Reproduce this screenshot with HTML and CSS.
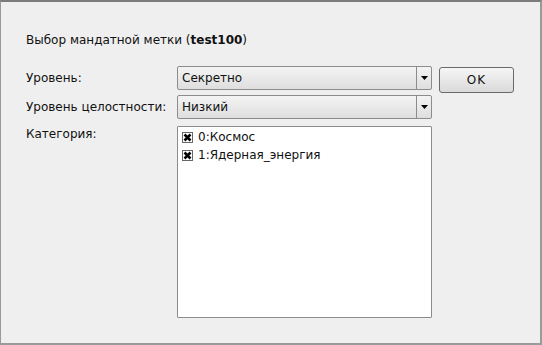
FILE: index.html
```html
<!DOCTYPE html>
<html>
<head>
<meta charset="utf-8">
<link rel="stylesheet" href="styles.css">
</head>
<body>
<div class="window">
  <div class="title">Выбор мандатной метки (<b>test100</b>)</div>
  <div class="form">
    <div class="label">Уровень:</div>
    <div class="combo"><span class="value">Секретно</span><span class="drop"><svg width="7" height="4" viewBox="0 0 7 4"><path d="M0 0H7L3.5 4Z" fill="#000"/></svg></span></div>
    <div class="btn">OK</div>

    <div class="label">Уровень целостности:</div>
    <div class="combo"><span class="value">Низкий</span><span class="drop"><svg width="7" height="4" viewBox="0 0 7 4"><path d="M0 0H7L3.5 4Z" fill="#000"/></svg></span></div>
    <div></div>

    <div class="label label-top">Категория:</div>
    <div class="list">
      <div class="item"><span class="check"><svg width="11" height="11" viewBox="0 0 11 11"><rect x="0.5" y="0.5" width="10" height="10" fill="#fff" stroke="#666"/><path d="M2.5 2.5L8.5 8.5M8.5 2.5L2.5 8.5" stroke="#000" stroke-width="2.6"/></svg></span>0:Космос</div>
      <div class="item"><span class="check"><svg width="11" height="11" viewBox="0 0 11 11"><rect x="0.5" y="0.5" width="10" height="10" fill="#fff" stroke="#666"/><path d="M2.5 2.5L8.5 8.5M8.5 2.5L2.5 8.5" stroke="#000" stroke-width="2.6"/></svg></span>1:Ядерная_энергия</div>
    </div>
    <div></div>
  </div>
</div>
</body>
</html>
```
FILE: styles.css
```css
html, body {
  margin: 0;
  padding: 0;
  background: #efefef;
}
body {
  font-family: "DejaVu Sans", sans-serif;
  font-size: 12px;
  color: #111;
}
.window {
  box-sizing: border-box;
  width: 542px;
  height: 345px;
  border-top: 2px solid #7c7c7c;
  border-left: 1px solid #9a9a9a;
  border-right: 2px solid #9a9a9a;
  border-bottom: 2px solid #9a9a9a;
  background: #efefef;
  padding: 31px 0 0 25px;
}
.title {
  line-height: 14px;
  height: 14px;
}
.title b {
  font-weight: bold;
}
.form {
  margin-top: 19px;
  display: grid;
  grid-template-columns: 151px 255px 82px;
  grid-template-rows: 24px 24px 194px;
  row-gap: 5px;
}
.label {
  display: flex;
  align-items: center;
  line-height: 14px;
}
.label-top {
  align-items: flex-start;
  padding-top: 3px;
}
.combo {
  box-sizing: border-box;
  display: flex;
  align-items: stretch;
  border: 1px solid #8c8c8c;
  border-radius: 2px;
  background: linear-gradient(#f4f4f4, #dedede);
}
.combo .value {
  flex: 1;
  display: flex;
  align-items: center;
  padding-left: 4px;
}
.combo .drop {
  width: 14px;
  border-left: 1px solid #8c8c8c;
  display: flex;
  align-items: center;
  justify-content: center;
}
.btn {
  box-sizing: border-box;
  margin-left: 7px;
  margin-top: 1px;
  height: 26px;
  border: 1px solid #6a6a6a;
  border-radius: 3px;
  background: linear-gradient(#f6f6f6, #dadada);
  display: flex;
  align-items: center;
  justify-content: center;
  letter-spacing: 1px;
}
.list {
  box-sizing: border-box;
  margin-top: 2px;
  border: 1px solid #8c8c8c;
  border-radius: 1px;
  background: #fff;
  padding: 1px 0 0 4px;
}
.item {
  display: flex;
  align-items: center;
  height: 18px;
  line-height: 14px;
}
.check {
  display: inline-flex;
  width: 11px;
  height: 11px;
  margin-right: 5px;
}
```
